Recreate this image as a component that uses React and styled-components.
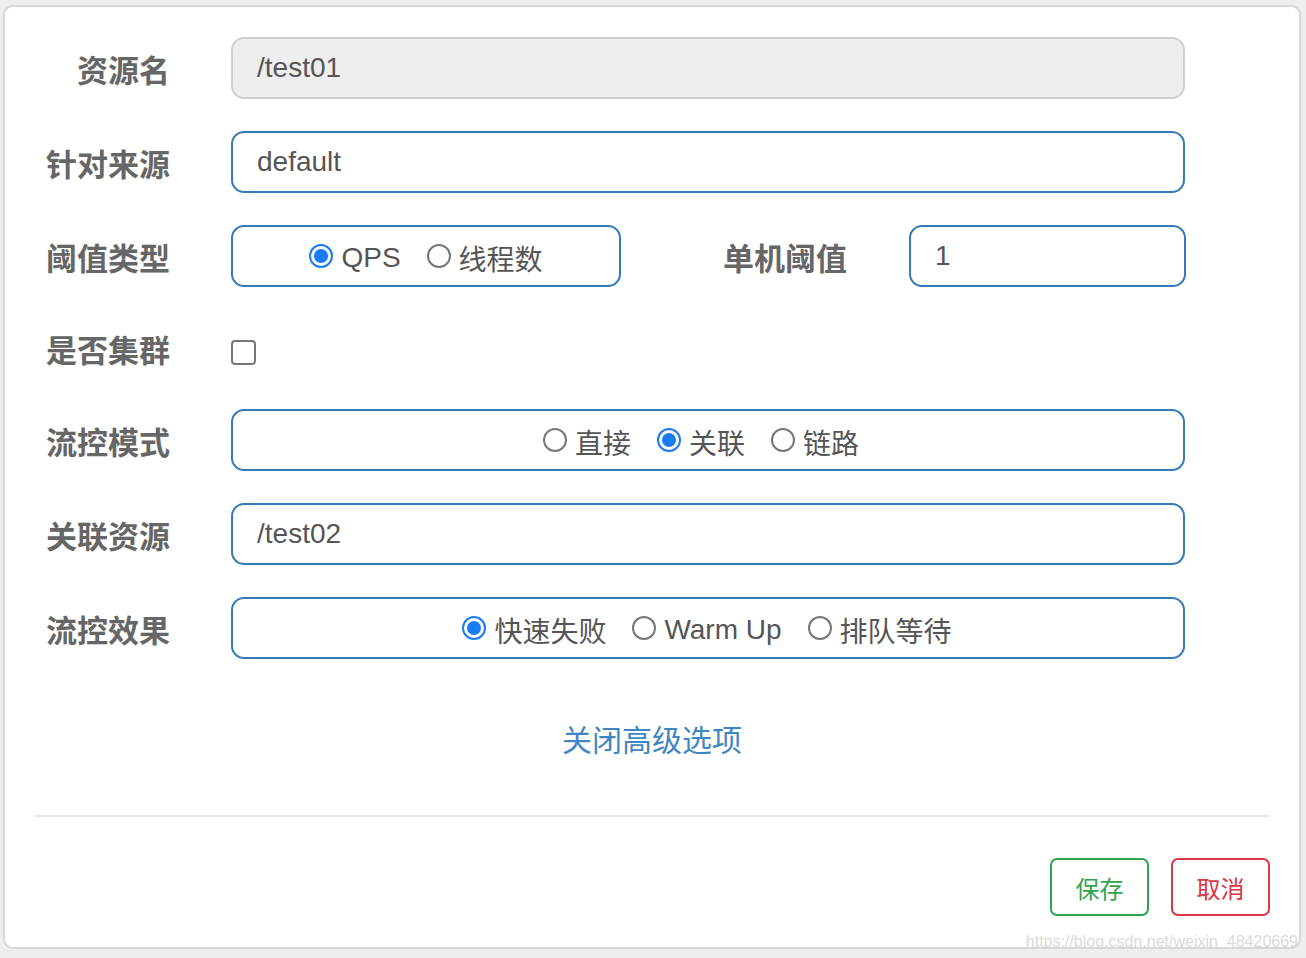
import styled, { createGlobalStyle } from "styled-components";

const GlobalStyle = createGlobalStyle`
  body {
    margin: 0;
    background: #eeeeee;
    font-family: "Liberation Sans", "Noto Sans CJK SC", sans-serif;
  }
`;

const Card = styled.div`
  position: relative;
  box-sizing: border-box;
  margin: 5px 0 0 3px;
  width: 1298px;
  height: 944px;
  background: #fff;
  border: 2px solid #d7d7d7;
  border-radius: 10px;
  display: flex;
  flex-direction: column;
`;

const Form = styled.div`
  display: flex;
  flex-direction: column;
  gap: 32px;
  padding-top: 30px;
`;

const Row = styled.div`
  display: flex;
  align-items: center;
  height: ${({ short }) => (short ? "58px" : "62px")};
`;

const Label = styled.div`
  width: 165px;
  margin-right: 61px;
  text-align: right;
  font-size: 31px;
  font-weight: bold;
  color: #666;
`;

const InlineLabel = styled(Label)`
  flex: 1;
  width: auto;
  margin-right: 62px;
`;

const Input = styled.div`
  box-sizing: border-box;
  width: ${({ w }) => w || "954px"};
  height: 62px;
  border: 2px solid ${({ readOnly }) => (readOnly ? "#cfcfcf" : "#337ab7")};
  background: ${({ readOnly }) => (readOnly ? "#eeeeee" : "#fff")};
  border-radius: 13px;
  padding-left: 24px;
  display: flex;
  align-items: center;
  font-size: 28px;
  color: #555;
`;

const Group = styled(Input)`
  padding: 4px ${({ shift }) => shift || 0}px 0 0;
  justify-content: center;
  gap: 26px;
`;

const Option = styled.label`
  display: flex;
  align-items: center;
  gap: 8px;
  font-size: 28px;
  color: #555;
`;

const Radio = styled.span`
  box-sizing: border-box;
  width: 24px;
  height: 24px;
  border-radius: 50%;
  border: 2px solid ${({ checked }) => (checked ? "#1a7cf5" : "#777")};
  background: #fff;
  display: flex;
  align-items: center;
  justify-content: center;
  margin-top: -4px;

  &::after {
    content: "";
    width: 14px;
    height: 14px;
    border-radius: 50%;
    background: ${({ checked }) => (checked ? "#1a7cf5" : "transparent")};
  }
`;

const Checkbox = styled.span`
  box-sizing: border-box;
  width: 25px;
  height: 25px;
  margin-top: 8px;
  border: 2px solid #777;
  border-radius: 4px;
  background: #fff;
`;

const Toggle = styled.a`
  align-self: center;
  margin-top: 62px;
  line-height: 40px;
  font-size: 30px;
  color: #3f86c4;
  text-decoration: none;
`;

const Divider = styled.div`
  margin: 54px 29px 0;
  height: 2px;
  background: #e6e6e6;
`;

const Footer = styled.div`
  display: flex;
  justify-content: flex-end;
  gap: 22px;
  padding: 41px 29px 0;
`;

const Button = styled.button`
  box-sizing: border-box;
  width: 99px;
  height: 58px;
  background: #fff;
  border: 2px solid ${({ color }) => color};
  color: ${({ color }) => color};
  border-radius: 7px;
  font-family: inherit;
  font-size: 24px;
`;

const Watermark = styled.div`
  position: absolute;
  right: 1px;
  bottom: -4px;
  font-size: 16px;
  color: rgba(205, 205, 205, 0.75);
`;

const RadioOption = ({ checked, children }) => (
  <Option>
    <Radio checked={checked} />
    {children}
  </Option>
);

export default function App() {
  return (
    <>
      <GlobalStyle />
      <Card>
        <Form>
          <Row>
            <Label>资源名</Label>
            <Input readOnly>/test01</Input>
          </Row>
          <Row>
            <Label>针对来源</Label>
            <Input>default</Input>
          </Row>
          <Row>
            <Label>阈值类型</Label>
            <Group w="390px">
              <RadioOption checked>QPS</RadioOption>
              <RadioOption>线程数</RadioOption>
            </Group>
            <InlineLabel>单机阈值</InlineLabel>
            <Input w="277px">1</Input>
            <div style={{ width: 113 }} />
          </Row>
          <Row short>
            <Label>是否集群</Label>
            <Checkbox />
          </Row>
          <Row>
            <Label>流控模式</Label>
            <Group shift={14}>
              <RadioOption>直接</RadioOption>
              <RadioOption checked>关联</RadioOption>
              <RadioOption>链路</RadioOption>
            </Group>
          </Row>
          <Row>
            <Label>关联资源</Label>
            <Input>/test02</Input>
          </Row>
          <Row>
            <Label>流控效果</Label>
            <Group shift={2}>
              <RadioOption checked>快速失败</RadioOption>
              <RadioOption>Warm Up</RadioOption>
              <RadioOption>排队等待</RadioOption>
            </Group>
          </Row>
        </Form>
        <Toggle>关闭高级选项</Toggle>
        <Divider />
        <Footer>
          <Button color="#2ea44f">保存</Button>
          <Button color="#dc3545">取消</Button>
        </Footer>
        <Watermark>https://blog.csdn.net/weixin_48420669</Watermark>
      </Card>
    </>
  );
}
